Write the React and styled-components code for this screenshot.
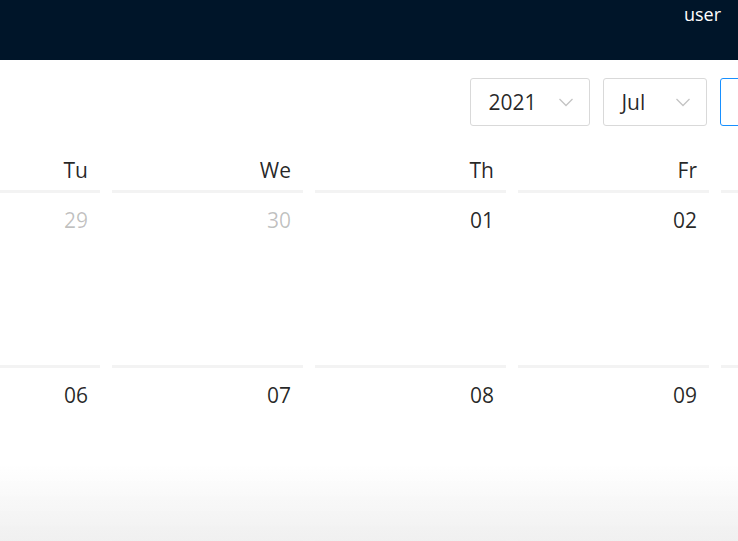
import React from 'react';
import styled, { createGlobalStyle } from 'styled-components';

const GlobalStyle = createGlobalStyle`
  html, body {
    margin: 0;
    padding: 0;
    overflow: hidden;
    background: #fff;
  }
  body {
    font-family: "Open Sans", "Noto Sans", sans-serif;
    color: rgba(0, 0, 0, 0.85);
  }
`;

const Page = styled.div`
  width: 738px;
  height: 541px;
  overflow: hidden;
  display: flex;
  flex-direction: column;
`;

const TopBar = styled.header`
  height: 60px;
  flex-shrink: 0;
  background: #001529;
  display: flex;
  justify-content: flex-end;
  align-items: flex-start;
  padding-right: 17px;
`;

const UserName = styled.span`
  color: #fff;
  font-size: 18px;
  font-weight: 500;
  line-height: 29px;
`;

const Calendar = styled.div`
  width: 1421px;
  margin-left: -503px;
  background: #fff;
`;

const CalendarHeader = styled.div`
  display: flex;
  justify-content: flex-end;
  gap: 13px;
  padding: 18px 0;
`;

const Select = styled.div`
  width: ${(p) => p.width}px;
  height: 48px;
  box-sizing: border-box;
  border: 1px solid #d9d9d9;
  border-radius: 3px;
  display: flex;
  align-items: center;
  justify-content: space-between;
  padding: 0 15px 0 17px;
  font-size: 21px;
  color: rgba(0, 0, 0, 0.85);
`;

const RadioGroup = styled.div`
  display: flex;
`;

const RadioButton = styled.div`
  height: 48px;
  box-sizing: border-box;
  padding: 0 21.5px;
  display: flex;
  align-items: center;
  font-size: 21px;
  border: 1px solid ${(p) => (p.active ? '#1890ff' : '#d9d9d9')};
  color: ${(p) => (p.active ? '#1890ff' : 'rgba(0, 0, 0, 0.85)')};
  border-radius: ${(p) => (p.first ? '3px 0 0 3px' : '0 3px 3px 0')};
  margin-left: ${(p) => (p.first ? '0' : '-1px')};
  z-index: ${(p) => (p.active ? 1 : 0)};
`;

const Grid = styled.div`
  display: grid;
  grid-template-columns: repeat(7, 1fr);
`;

const WeekDay = styled.div`
  text-align: right;
  font-size: 21px;
  line-height: 27px;
  padding: 13px 18px 6px 0;
`;

const Cell = styled.div`
  margin: 0 6px;
  padding: 9px 12px 0;
  border-top: 3px solid #f3f3f3;
  height: 175px;
  box-sizing: border-box;
  text-align: right;
`;

const DateValue = styled.div`
  font-size: 21px;
  line-height: 36px;
  color: ${(p) => (p.muted ? 'rgba(0, 0, 0, 0.25)' : 'rgba(0, 0, 0, 0.85)')};
`;

const BottomFade = styled.div`
  position: fixed;
  left: 0;
  right: 0;
  bottom: 0;
  height: 75px;
  pointer-events: none;
  background: linear-gradient(to bottom, rgba(240, 240, 240, 0), rgba(238, 238, 238, 0.9));
`;

const Chevron = () => (
  <svg width="16" height="14" viewBox="0 0 16 14" fill="none">
    <path d="M1.5 4 L8 10.5 L14.5 4" stroke="#c4c4c4" strokeWidth="1.3" />
  </svg>
);

const weekDays = ['Su', 'Mo', 'Tu', 'We', 'Th', 'Fr', 'Sa'];

const rows = [
  [
    { d: '27', muted: true },
    { d: '28', muted: true },
    { d: '29', muted: true },
    { d: '30', muted: true },
    { d: '01' },
    { d: '02' },
    { d: '03' },
  ],
  [
    { d: '04' },
    { d: '05' },
    { d: '06' },
    { d: '07' },
    { d: '08' },
    { d: '09' },
    { d: '10' },
  ],
  [
    { d: '11' },
    { d: '12' },
    { d: '13' },
    { d: '14' },
    { d: '15' },
    { d: '16' },
    { d: '17' },
  ],
];

const App = () => {
  return (
    <Page>
      <GlobalStyle />
      <TopBar>
        <UserName>user</UserName>
      </TopBar>
      <Calendar>
        <CalendarHeader>
          <Select width={120}>
            <span>2021</span>
            <Chevron />
          </Select>
          <Select width={104}>
            <span>Jul</span>
            <Chevron />
          </Select>
          <RadioGroup>
            <RadioButton first active>Month</RadioButton>
            <RadioButton>Year</RadioButton>
          </RadioGroup>
        </CalendarHeader>
        <Grid>
          {weekDays.map((w) => (
            <WeekDay key={w}>{w}</WeekDay>
          ))}
          {rows.flat().map((c, i) => (
            <Cell key={i}>
              <DateValue muted={c.muted}>{c.d}</DateValue>
            </Cell>
          ))}
        </Grid>
      </Calendar>
      <BottomFade />
    </Page>
  );
};

export default App;
